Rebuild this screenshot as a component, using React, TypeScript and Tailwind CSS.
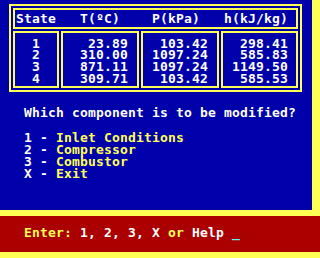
const rows = [
  { state: "1", t: "23.89", p: "103.42", h: "298.41" },
  { state: "2", t: "310.00", p: "1097.24", h: "585.83" },
  { state: "3", t: "871.11", p: "1097.24", h: "1149.50" },
  { state: "4", t: "309.71", p: "103.42", h: "585.53" },
];

const menu = [
  { key: "1", label: "Inlet Conditions" },
  { key: "2", label: "Compressor" },
  { key: "3", label: "Combustor" },
  { key: "X", label: "Exit" },
];

function Column({ values, className }: { values: string[]; className: string }) {
  return (
    <div className={`border-2 border-[#FFFF55] pt-[4.5px] leading-[11.67px] ${className}`}>
      {values.map((v, i) => (
        <div key={i}>{v}</div>
      ))}
    </div>
  );
}

export default function App() {
  return (
    <div className="w-[320px] h-[258px] bg-[#FFFF55] font-['DejaVu_Sans_Mono',monospace] font-bold text-[13px] tracking-[0.174px] text-white overflow-hidden">
      <div className="w-[312px] h-[210px] bg-[#0000AA] pt-[4px]">
        <div className="ml-[9px] w-[293px] h-[88px] border-2 border-[#FFFF55] p-[2px] flex flex-col gap-[2px]">
          <div className="h-[21px] border-2 border-[#FFFF55] flex pl-[1px] pt-[1px] leading-[16px]">
            <span className="w-[64px]">State</span>
            <span className="w-[72px]">T(ºC)</span>
            <span className="w-[72px]">P(kPa)</span>
            <span>h(kJ/kg)</span>
          </div>
          <div className="flex gap-[2px] h-[57px]">
            <Column className="w-[46px] text-center" values={rows.map((r) => r.state)} />
            <Column className="w-[78px] text-right pr-[9px]" values={rows.map((r) => r.t)} />
            <Column className="w-[78px] text-right pr-[9px]" values={rows.map((r) => r.p)} />
            <Column className="w-[77px] text-right pr-[8px]" values={rows.map((r) => r.h)} />
          </div>
        </div>

        <p className="mt-[15px] ml-[24px] leading-[12px]">Which component is to be modified?</p>

        <div className="mt-[13px] ml-[24px] leading-[12px] whitespace-pre">
          {menu.map((m) => (
            <div key={m.key}>
              {m.key} - <span className="text-[#FFFF55]">{m.label}</span>
            </div>
          ))}
        </div>
      </div>

      <div className="mt-[6px] h-[36px] bg-[#AA0000] pt-[11px] pl-[24px] leading-[12px] whitespace-pre">
        <span className="text-[#FFFF55]">Enter: </span>
        <span>1, 2, 3, X </span>
        <span className="text-[#FFFF55]">or </span>
        <span>Help </span>
        <span className="text-[#55FFFF]">_</span>
      </div>
    </div>
  );
}
